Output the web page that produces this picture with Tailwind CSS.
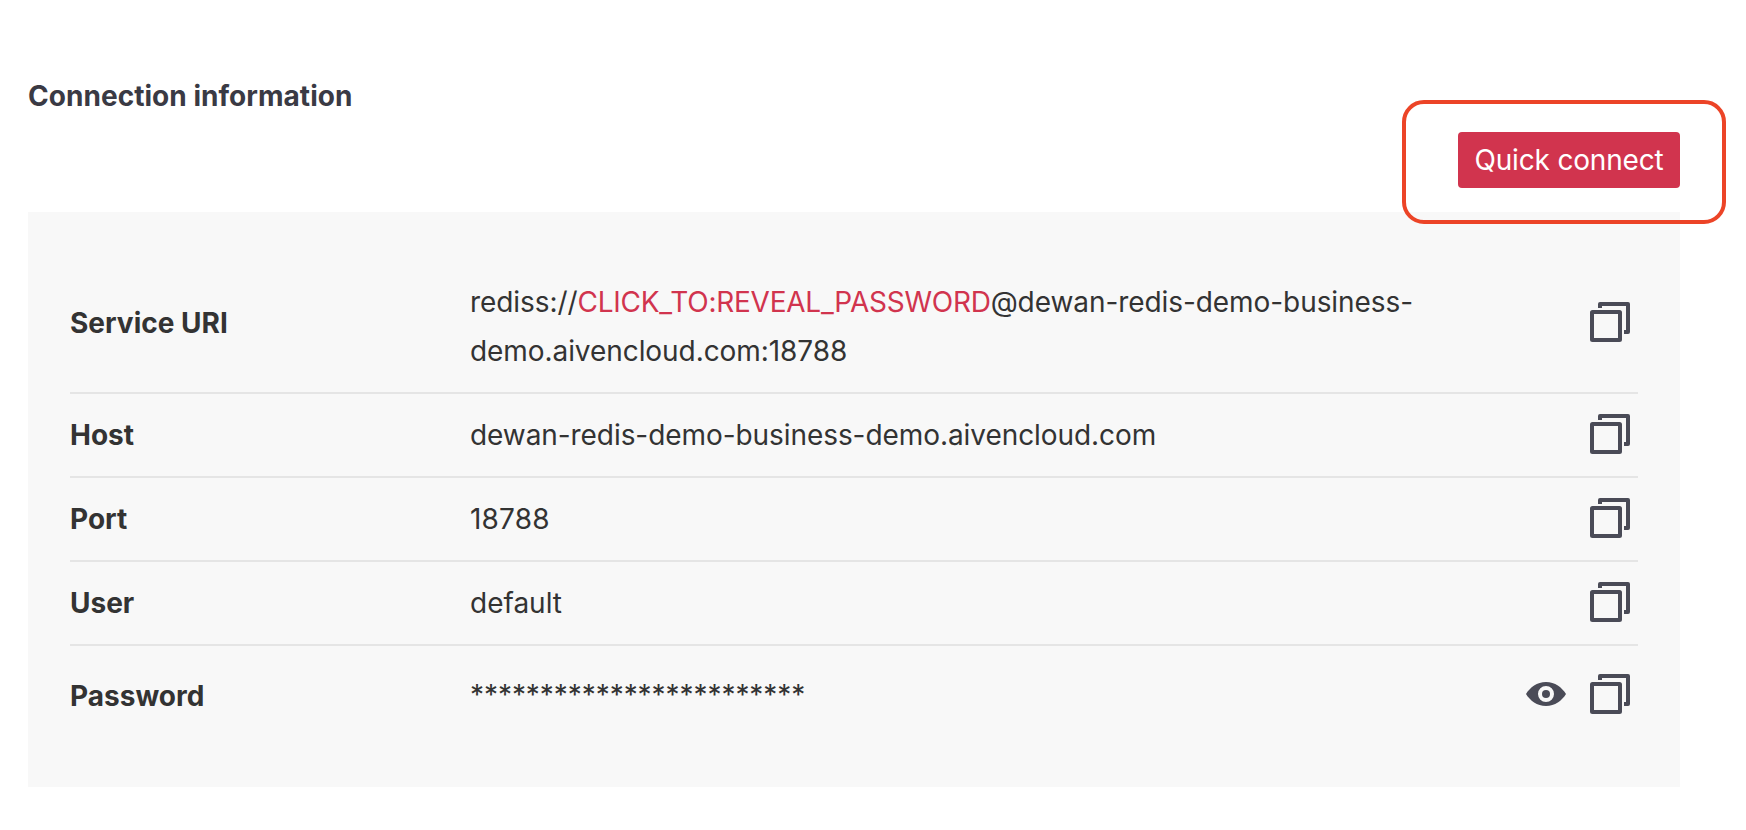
<!DOCTYPE html>
<html lang="en">
<head>
<meta charset="utf-8">
<title>Connection information</title>
<script src="https://cdn.jsdelivr.net/npm/@tailwindcss/browser@4"></script>
</head>
<body class="bg-white font-['Inter',sans-serif] text-[28px] leading-[49px] text-[#333333] h-[830px] overflow-hidden">
<svg class="hidden">
  <symbol id="copy" viewBox="0 0 40 40">
    <rect x="2" y="10" width="28" height="28" rx="0.5" fill="none" stroke="#4a4b57" stroke-width="4"/>
    <path d="M8 6V2a2 2 0 0 1 2-2h28a2 2 0 0 1 2 2v28a2 2 0 0 1-2 2h-4v-4h2V4H12v2z" fill="#4a4b57"/>
  </symbol>
</svg>
<main class="pl-7 pr-[66px] pt-[72px]">
  <h2 class="h-[49px] font-bold tracking-[0.04px] text-[#3a3a44]">Connection information</h2>
  <div class="mt-[11px] flex justify-end">
    <div class="relative">
      <button class="block h-14 w-[222px] rounded bg-[#d1344e] text-center leading-[56px] tracking-[-0.17px] text-white whitespace-nowrap">Quick connect</button>
      <div class="pointer-events-none absolute -left-14 -top-8 h-[124px] w-[324px] rounded-[22px] border-4 border-[#ec4427]"></div>
    </div>
  </div>
  <dl class="mt-6 h-[575px] bg-[#f8f8f8] px-[42px] pt-10">
    <div class="flex h-[142px] items-center border-b-2 border-[#e5e5e5]">
      <dt class="w-[400px] pt-0.5 font-bold">Service URI</dt>
      <dd class="w-[1000px] pt-[9px] tracking-[-0.07px]">rediss://<span class="tracking-[-0.25px] text-[#d1344e]">CLICK_TO:REVEAL_PASSWORD</span>@dewan-redis-demo-business-<br>demo.aivencloud.com:18788</dd>
      <dd class="ml-auto mr-2"><svg class="size-10"><use href="#copy"/></svg></dd>
    </div>
    <div class="flex h-[84px] items-center border-b-2 border-[#e5e5e5]">
      <dt class="w-[400px] font-bold">Host</dt>
      <dd class="tracking-[-0.07px]">dewan-redis-demo-business-demo.aivencloud.com</dd>
      <dd class="ml-auto mr-2 pb-0.5"><svg class="size-10"><use href="#copy"/></svg></dd>
    </div>
    <div class="flex h-[84px] items-center border-b-2 border-[#e5e5e5]">
      <dt class="w-[400px] font-bold">Port</dt>
      <dd class="tracking-[0.2px]">18788</dd>
      <dd class="ml-auto mr-2 pb-0.5"><svg class="size-10"><use href="#copy"/></svg></dd>
    </div>
    <div class="flex h-[84px] items-center border-b-2 border-[#e5e5e5]">
      <dt class="w-[400px] font-bold">User</dt>
      <dd>default</dd>
      <dd class="ml-auto mr-2 pb-0.5"><svg class="size-10"><use href="#copy"/></svg></dd>
    </div>
    <div class="flex h-[100px] items-center">
      <dt class="w-[400px] font-bold">Password</dt>
      <dd class="pb-0.5 tracking-[-0.06px]">************************</dd>
      <dd class="ml-auto mr-2 flex gap-6 pb-1">
        <svg class="size-10" viewBox="0 0 40 40"><path fill="#4a4b57" fill-rule="evenodd" d="M0 20C4 13.500 11 8 20 8s16 5.500 20 12c-4 6.500-11 12-20 12S4 26.500 0 20zM20 12a8 8 0 1 0 0 16 8 8 0 0 0 0-16z"/><circle cx="20" cy="20" r="4" fill="#4a4b57"/></svg>
        <svg class="size-10"><use href="#copy"/></svg>
      </dd>
    </div>
  </dl>
</main>
</body>
</html>
